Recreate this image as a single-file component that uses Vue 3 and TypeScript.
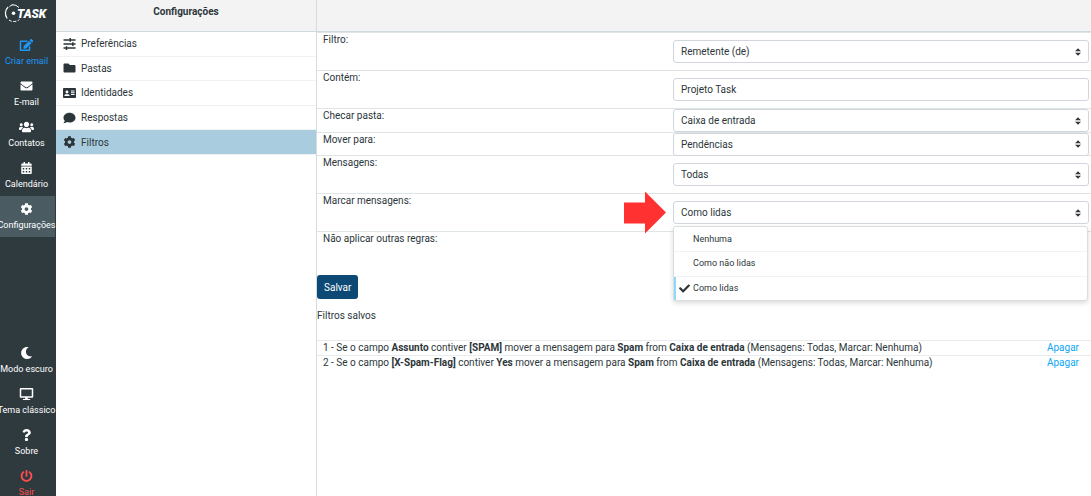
<script setup lang="ts">
import { ref } from 'vue'

interface Glyph { w: number; d: string }

const glyphs: Record<string, Glyph> = {
  edit: { w: 576, d: 'M402.6 83.2l90.2 90.2c3.8 3.8 3.8 10 0 13.8L274.4 405.6l-92.8 10.3c-12.4 1.4-22.9-9.1-21.5-21.5l10.3-92.8L388.8 83.2c3.8-3.8 10-3.8 13.8 0zm162-22.9l-48.8-48.8c-15.2-15.2-39.9-15.2-55.2 0l-35.4 35.4c-3.8 3.8-3.8 10 0 13.8l90.2 90.2c3.8 3.8 10 3.8 13.8 0l35.4-35.4c15.2-15.3 15.2-40 0-55.2zM384 346.2V448H64V128h229.8c3.2 0 6.2-1.3 8.5-3.5l40-40c7.6-7.6 2.2-20.5-8.5-20.5H48C21.5 64 0 85.5 0 112v352c0 26.5 21.5 48 48 48h352c26.5 0 48-21.5 48-48V306.2c0-10.7-12.9-16-20.5-8.5l-40 40c-2.2 2.3-3.5 5.3-3.5 8.5z' },
  mail: { w: 512, d: 'M502.3 190.8c3.9-3.1 9.7-.2 9.7 4.7V400c0 26.5-21.5 48-48 48H48c-26.5 0-48-21.5-48-48V195.6c0-5 5.7-7.8 9.7-4.7 22.4 17.4 52.1 39.5 154.1 113.6 21.1 15.4 56.7 47.8 92.2 47.6 35.7.3 72-32.8 92.3-47.6 102-74.1 131.6-96.3 154-113.7zM256 320c23.2.4 56.6-29.2 73.4-41.4 132.7-96.3 142.8-104.7 173.4-128.7 5.8-4.5 9.2-11.5 9.2-18.9v-19c0-26.5-21.5-48-48-48H48c-26.5 0-48 21.5-48 48v19c0 7.4 3.4 14.3 9.2 18.9 30.6 23.9 40.7 32.4 173.4 128.7 16.8 12.2 50.2 41.8 73.4 41.4z' },
  users: { w: 640, d: 'M96 224c35.3 0 64-28.7 64-64s-28.7-64-64-64-64 28.7-64 64 28.7 64 64 64zm448 0c35.3 0 64-28.7 64-64s-28.7-64-64-64-64 28.7-64 64 28.7 64 64 64zm32 32h-64c-17.6 0-33.5 7.1-45.1 18.6 40.3 22.1 68.9 62 75.1 109.4h66c17.7 0 32-14.3 32-32v-32c0-35.3-28.7-64-64-64zm-256 0c61.9 0 112-50.1 112-112S381.9 32 320 32 208 82.1 208 144s50.1 112 112 112zm76.8 32h-8.3c-20.8 10-43.9 16-68.5 16s-47.6-6-68.5-16h-8.3C179.6 288 128 339.6 128 403.2V432c0 26.5 21.5 48 48 48h288c26.5 0 48-21.5 48-48v-28.8c0-63.6-51.6-115.2-115.2-115.2zm-223.7-13.4C161.5 263.1 145.6 256 128 256H64c-35.3 0-64 28.7-64 64v32c0 17.7 14.3 32 32 32h65.9c6.3-47.4 34.9-87.3 75.2-109.4z' },
  calendar: { w: 448, d: 'M0 464c0 26.5 21.5 48 48 48h352c26.5 0 48-21.5 48-48V192H0zM64 256h64v64H64zM192 256h64v64h-64zM320 256h64v64h-64zM64 384h64v64H64zM192 384h64v64h-64zM320 384h64v64h-64zM400 64h-48V16c0-8.8-7.2-16-16-16h-32c-8.8 0-16 7.2-16 16v48H160V16c0-8.8-7.2-16-16-16h-32c-8.8 0-16 7.2-16 16v48H48C21.5 64 0 85.5 0 112v48h448v-48c0-26.5-21.5-48-48-48z' },
  cog: { w: 512, d: 'M487.4 315.7l-42.6-24.6c4.3-23.2 4.3-47 0-70.2l42.6-24.6c4.9-2.8 7.1-8.6 5.5-14-11.1-35.6-30-67.8-54.7-94.6-3.8-4.1-10-5.1-14.8-2.3L380.8 110c-17.9-15.4-38.5-27.3-60.8-35.1V25.8c0-5.6-3.9-10.5-9.4-11.7-36.7-8.2-74.3-7.8-109.2 0-5.5 1.2-9.4 6.1-9.4 11.7V75c-22.2 7.9-42.8 19.8-60.8 35.1L88.7 85.5c-4.9-2.8-11-1.9-14.8 2.3-24.7 26.7-43.6 58.9-54.7 94.6-1.7 5.4.6 11.2 5.5 14L67.3 221c-4.3 23.2-4.3 47 0 70.2l-42.6 24.6c-4.9 2.8-7.1 8.6-5.5 14 11.1 35.6 30 67.8 54.7 94.6 3.8 4.1 10 5.1 14.8 2.3l42.6-24.6c17.9 15.4 38.5 27.3 60.8 35.1v49.2c0 5.6 3.9 10.5 9.4 11.7 36.7 8.2 74.3 7.8 109.2 0 5.5-1.2 9.4-6.1 9.4-11.7v-49.2c22.2-7.9 42.8-19.8 60.8-35.1l42.6 24.6c4.9 2.8 11 1.9 14.8-2.3 24.7-26.7 43.6-58.9 54.7-94.6 1.5-5.5-.7-11.3-5.6-14.1zM256 336c-44.1 0-80-35.9-80-80s35.9-80 80-80 80 35.9 80 80-35.9 80-80 80z' },
  moon: { w: 512, d: 'M283.2 512c79 0 151.1-35.9 198.9-94.8 7-8.7-.7-21.4-11.6-19.3-124.2 23.6-238.3-71.6-238.3-197 0-72.2 38.7-138.6 101.5-174.4 9.7-5.5 7.3-20.2-3.7-22.2A258.2 258.2 0 0 0 283.2 0c-141.3 0-256 114.5-256 256 0 141.3 114.5 256 256 256z' },
  desktop: { w: 576, d: 'M528 0H48C21.5 0 0 21.5 0 48v320c0 26.5 21.5 48 48 48h192l-16 48h-72c-13.3 0-24 10.7-24 24s10.7 24 24 24h272c13.3 0 24-10.7 24-24s-10.7-24-24-24h-72l-16-48h192c26.5 0 48-21.5 48-48V48c0-26.5-21.5-48-48-48zm-16 352H64V64h448v288z' },
  help: { w: 384, d: 'M202 0C122.2 0 70.5 32.7 29.9 91c-7.4 10.6-5.1 25.1 5.2 32.9l43.1 32.7c10.4 7.9 25.1 6 33.3-4.1 25-31.4 43.6-49.5 82.7-49.5 30.8 0 68.8 19.8 68.8 49.6 0 22.6-18.6 34.2-49 51.2-35.4 19.9-82.3 44.6-82.3 106.4V320c0 13.3 10.7 24 24 24h72.5c13.3 0 24-10.7 24-24v-5.8c0-42.9 125.3-44.6 125.3-160.6C377.5 66.3 286.9 0 202 0zM192 373.5c-38.2 0-69.3 31-69.3 69.2S153.8 512 192 512s69.3-31.1 69.3-69.3-31.1-69.2-69.3-69.2z' },
  power: { w: 512, d: 'M400 54.1c63 45 104 118.6 104 201.9 0 136.8-110.8 247.7-247.5 248C120 504.3 8.2 393 8 256.4 7.9 173.1 48.9 99.3 111.8 54.2c11.7-8.3 28-4.8 35 7.7L162.6 90c5.9 10.5 3.1 23.8-6.6 31-41.5 30.8-68 79.6-68 134.9-.1 92.3 74.5 168.1 168 168.1 91.6 0 168.6-74.2 168-169.1-.3-51.8-24.7-101.8-68.1-134-9.7-7.2-12.4-20.5-6.5-30.9l15.8-28.1c7-12.4 23.2-16.1 34.8-7.8zM296 264V24c0-13.3-10.7-24-24-24h-32c-13.3 0-24 10.7-24 24v240c0 13.3 10.7 24 24 24h32c13.3 0 24-10.7 24-24z' },
  sliders: { w: 512, d: 'M0 52h256V4h64v48h192v64H320v48h-64v-48H0zM0 224h368v-48h64v48h80v64h-80v48h-64v-48H0zM0 396h96v-48h64v48h352v64H160v48H96v-48H0z' },
  folder: { w: 512, d: 'M464 128H272l-64-64H48C21.5 64 0 85.5 0 112v288c0 26.5 21.5 48 48 48h416c26.5 0 48-21.5 48-48V176c0-26.5-21.5-48-48-48z' },
  card: { w: 576, d: 'M528 32H48C21.5 32 0 53.5 0 80v352c0 26.5 21.5 48 48 48h480c26.5 0 48-21.5 48-48V80c0-26.5-21.5-48-48-48zM176 150a64 64 0 0 1 0 128a64 64 0 0 1 0-128zM64 384v-14c0-32 30-58 67-58h90c37 0 67 26 67 58v14zM352 150h160v42H352zM352 224h160v42H352zM352 298h160v42H352z' },
  comment: { w: 512, d: 'M256 32C114.6 32 0 125.1 0 240c0 49.6 21.4 95 57 130.7C44.5 421.1 2.7 466 2.2 466.5c-2.2 2.3-2.8 5.7-1.5 8.7S4.8 480 8 480c66.3 0 116-31.8 140.6-51.4 32.7 12.3 69 19.4 107.4 19.4 141.4 0 256-93.1 256-208S397.4 32 256 32z' },
  check: { w: 512, d: 'M173.9 439.4L7.5 273c-10-10-10-26.2 0-36.2l36.2-36.2c10-10 26.2-10 36.2 0L192 312.7 432.1 72.6c10-10 26.2-10 36.2 0l36.2 36.2c10 10 10 26.2 0 36.2L210.1 439.4c-10 10-26.2 10-36.2 0z' },
}

const tasksTop = [
  { icon: 'edit', label: 'Criar email', kind: 'create' },
  { icon: 'mail', label: 'E-mail', kind: '' },
  { icon: 'users', label: 'Contatos', kind: '' },
  { icon: 'calendar', label: 'Calendário', kind: '' },
  { icon: 'cog', label: 'Configurações', kind: 'active' },
]
const tasksBottom = [
  { icon: 'moon', label: 'Modo escuro', kind: '' },
  { icon: 'desktop', label: 'Tema clássico', kind: '' },
  { icon: 'help', label: 'Sobre', kind: '' },
  { icon: 'power', label: 'Sair', kind: 'exit' },
]
const sections = [
  { icon: 'sliders', label: 'Preferências' },
  { icon: 'folder', label: 'Pastas' },
  { icon: 'card', label: 'Identidades' },
  { icon: 'comment', label: 'Respostas' },
  { icon: 'cog', label: 'Filtros' },
]
const currentSection = ref('Filtros')

const needle = ref('Projeto Task')
const stopRules = ref(false)
const mark = ref('Como lidas')
const menuOpen = ref(true)
const markOptions = ['Nenhuma', 'Como não lidas', 'Como lidas']

function pick(option: string) {
  mark.value = option
  menuOpen.value = false
}

const saved = [
  { id: 1, field: 'Assunto', value: '[SPAM]' },
  { id: 2, field: '[X-Spam-Flag]', value: 'Yes' },
]
</script>

<template>
  <div class="layout">
    <nav class="taskbar">
      <a class="logo" href="#" aria-label="Task">
        <svg viewBox="0 0 48 20" width="48" height="20">
          <g fill="none" stroke="#fff">
            <path d="M4.2 4A8.5 8.5 0 0 0 3.2 15.500" stroke-width="1.2" />
            <path d="M5.5 3.5L8.5 1.6M8 1.8A8.5 8.5 0 0 1 15 4.5" stroke-width="1" />
            <path d="M5 17A8.5 8.5 0 0 0 15.5 16.5" stroke-width="1" stroke-dasharray="3 1.5" />
          </g>
          <circle cx="9.5" cy="10.3" r="1.8" fill="#fff" />
          <text x="13" y="14.5" class="logo-text">TASK</text>
        </svg>
      </a>
      <a v-for="t in tasksTop" :key="t.label" href="#" class="task" :class="t.kind">
        <svg class="task-icon" :viewBox="`0 0 ${glyphs[t.icon].w} 512`"><path :d="glyphs[t.icon].d" fill-rule="evenodd" /></svg>
        <span>{{ t.label }}</span>
      </a>
      <div class="task-foot">
        <a v-for="t in tasksBottom" :key="t.label" href="#" class="task" :class="t.kind">
          <svg class="task-icon" :viewBox="`0 0 ${glyphs[t.icon].w} 512`"><path :d="glyphs[t.icon].d" fill-rule="evenodd" /></svg>
          <span>{{ t.label }}</span>
        </a>
      </div>
    </nav>

    <aside class="sections">
      <h1 class="bar">Configurações</h1>
      <div class="section-list">
        <a
          v-for="s in sections"
          :key="s.label"
          href="#"
          class="section"
          :class="{ selected: s.label === currentSection }"
          @click.prevent="currentSection = s.label"
        >
          <svg class="section-icon" :viewBox="`0 0 ${glyphs[s.icon].w} 512`"><path :d="glyphs[s.icon].d" fill-rule="evenodd" /></svg>
          <span>{{ s.label }}</span>
        </a>
      </div>
    </aside>

    <main class="content">
      <div class="bar"></div>
      <form @submit.prevent>
        <div class="row">
          <label for="field">Filtro:</label>
          <div class="cell"><select id="field"><option>Remetente (de)</option></select></div>
        </div>
        <div class="row">
          <label for="needle">Contém:</label>
          <div class="cell"><input id="needle" v-model="needle" type="text" /></div>
        </div>
        <div class="pair">
          <div class="row">
            <label for="source">Checar pasta:</label>
            <div class="cell"><select id="source"><option>Caixa de entrada</option></select></div>
          </div>
          <div class="row">
            <label for="target">Mover para:</label>
            <div class="cell"><select id="target"><option>Pendências</option></select></div>
          </div>
        </div>
        <div class="row">
          <label for="scope">Mensagens:</label>
          <div class="cell"><select id="scope"><option>Todas</option></select></div>
        </div>
        <div class="row">
          <label for="mark">Marcar mensagens:</label>
          <div class="cell">
            <svg class="pointer" viewBox="0 0 42 42" aria-hidden="true"><path d="M0 11h21V0l21 21-21 21V32H0z" /></svg>
            <select id="mark" v-model="mark" @mousedown.prevent="menuOpen = !menuOpen">
              <option v-for="o in markOptions" :key="o">{{ o }}</option>
            </select>
            <ul v-if="menuOpen" class="menu">
              <li v-for="o in markOptions" :key="o">
                <button type="button" class="option" :class="{ chosen: o === mark }" @click="pick(o)">
                  <svg v-if="o === mark" class="tick" viewBox="0 0 512 512"><path :d="glyphs.check.d" /></svg>
                  <span>{{ o }}</span>
                </button>
              </li>
            </ul>
          </div>
        </div>
        <div class="row">
          <label for="stop">Não aplicar outras regras:</label>
          <div class="cell"><input id="stop" v-model="stopRules" type="checkbox" /></div>
        </div>
        <button class="save" type="submit">Salvar</button>
      </form>

      <h2 class="saved-title">Filtros salvos</h2>
      <table class="saved">
        <tbody>
          <tr v-for="f in saved" :key="f.id">
            <td>{{ f.id }} - Se o campo <b>{{ f.field }}</b> contiver <b>{{ f.value }}</b> mover a mensagem para <b>Spam</b> from <b>Caixa de entrada</b> (Mensagens: Todas, Marcar: Nenhuma)</td>
            <td class="action"><a href="#">Apagar</a></td>
          </tr>
        </tbody>
      </table>
    </main>
  </div>
</template>

<style>
body {
  margin: 0;
}
</style>

<style scoped>
* {
  box-sizing: border-box;
}

.layout {
  display: flex;
  height: 100vh;
  overflow: hidden;
  background: #fff;
  color: #2c363a;
  font: 10px/15px Roboto, sans-serif;
}

a {
  text-decoration: none;
}

.taskbar {
  display: flex;
  flex-direction: column;
  flex: 0 0 56px;
  width: 56px;
  overflow: hidden;
  background: #2f3a3f;
}

.logo {
  flex: 0 0 32px;
  padding: 3px 4px;
}

.logo svg {
  display: block;
}

.logo-text {
  fill: #fff;
  font: italic 900 12px Roboto, sans-serif;
}

.task {
  display: flex;
  flex-direction: column;
  align-items: center;
  flex: 0 0 41px;
  height: 41px;
  margin-right: 1px;
  padding: 7px 2px 0 0;
  color: #fff;
  font-size: 9px;
  line-height: 12px;
  white-space: nowrap;
}

.task-icon {
  flex: none;
  width: 15px;
  height: 12px;
  margin-bottom: 4px;
  fill: currentColor;
}

.create {
  color: #1e97f7;
}

.active {
  background: #4a5b62;
}

.exit {
  color: #ff4d4d;
}

.task-foot {
  margin-top: auto;
  margin-bottom: -8px;
}

.sections {
  flex: 0 0 261px;
  border-right: 1px solid #d5dce0;
}

.bar {
  height: 32px;
  margin: 0;
  border-bottom: 1px solid #d0d9dd;
  background: #f3f3f3;
  font-size: 10px;
  font-weight: 700;
  line-height: 24px;
  text-align: center;
}

.section-list {
  display: grid;
  grid-auto-rows: 1fr;
  height: 123px;
}

.section {
  display: flex;
  align-items: center;
  gap: 5px;
  padding: 0 7px;
  border-bottom: 1px solid #f0f2f3;
  color: #2c363a;
}

.section-icon {
  flex: none;
  width: 13px;
  height: 12px;
  fill: currentColor;
}

.selected {
  background: #a9cdde;
}

.content {
  flex: 1;
  min-width: 0;
}

.row {
  display: grid;
  grid-template-columns: 46% 54%;
  min-height: 38px;
  border-top: 1px solid #dfe4e7;
}

.row label {
  padding-left: 6px;
  line-height: 14px;
}

.cell {
  position: relative;
  padding: 7px 2px 7px 0;
}

.pair {
  display: grid;
  grid-auto-rows: 1fr;
  height: 47px;
}

.pair .row {
  min-height: 0;
}

.pair .cell {
  height: 0;
  padding-top: 0;
  padding-bottom: 0;
}

select,
input[type='text'] {
  display: block;
  width: 100%;
  height: 23px;
  margin: 0;
  padding: 0 7px;
  border: 1px solid #d0d6db;
  border-radius: 3px;
  background: #fff;
  color: #2c363a;
  font: inherit;
  appearance: none;
}

select {
  background: #fff url("data:image/svg+xml,%3Csvg xmlns='http://www.w3.org/2000/svg' viewBox='0 0 4 5'%3E%3Cpath fill='%23343a40' d='M2 0L0 2h4zm0 5L0 3h4z'/%3E%3C/svg%3E") no-repeat right 7px center / 6px 8px;
}

input[type='checkbox'] {
  display: block;
  margin: 0;
}

.pointer {
  position: absolute;
  top: -3px;
  left: -49px;
  width: 42px;
  height: 43px;
  fill: #ff3131;
}

.menu {
  display: grid;
  grid-auto-rows: 1fr;
  position: absolute;
  z-index: 1;
  top: 32px;
  right: 3px;
  left: 0;
  height: 75px;
  margin: 0;
  padding: 0;
  border: 1px solid #d8dee1;
  border-radius: 3px;
  background: #fff;
  box-shadow: 0 2px 5px rgba(0, 0, 0, 0.15);
  list-style: none;
}

.menu li {
  min-height: 0;
}

.menu li + li {
  border-top: 1px solid #f0f2f3;
}

.option {
  display: flex;
  align-items: center;
  gap: 3px;
  width: 100%;
  height: 100%;
  padding: 0 0 0 19px;
  border: 0;
  background: none;
  color: #2c363a;
  font: inherit;
  font-size: 9px;
}

.chosen {
  padding-left: 3px;
  border-left: 2px solid #8ed8fb;
}

.tick {
  width: 11px;
  height: 11px;
  fill: currentColor;
}

.save {
  display: block;
  height: 24px;
  margin-top: 6px;
  padding: 0 7px;
  border: 0;
  border-radius: 3px;
  background: #0c4a75;
  color: #fff;
  font: inherit;
}

.saved-title {
  margin: 9px 0 17px;
  font: inherit;
}

.saved {
  width: 100%;
  border-collapse: collapse;
}

.saved td {
  height: 15px;
  padding: 0 0 0 6px;
  border-top: 1px solid #e8ecee;
  line-height: 14px;
}

.saved .action {
  padding-right: 12px;
  text-align: right;
}

.action a {
  color: #0da7f5;
}
</style>
